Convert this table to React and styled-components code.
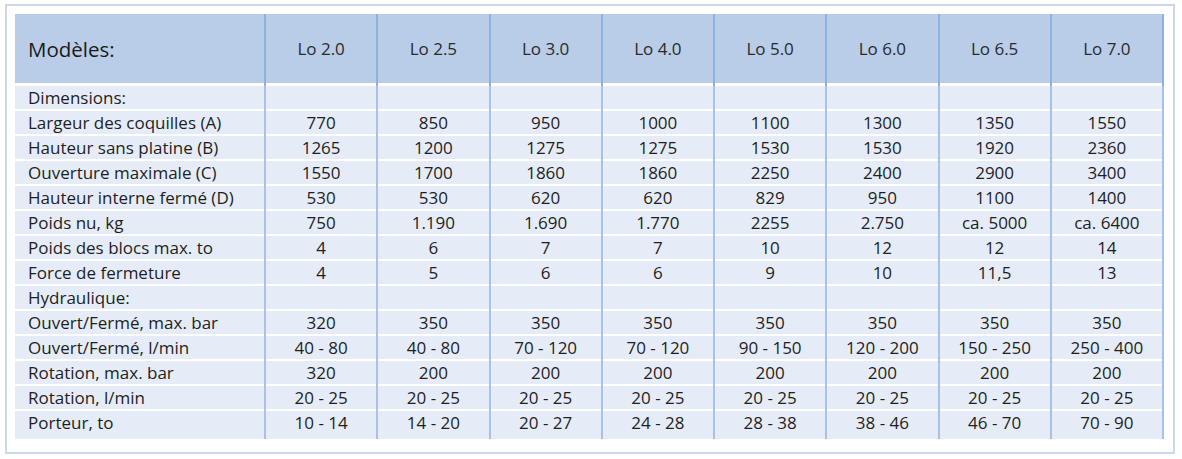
import React from "react";
import styled, { createGlobalStyle } from "styled-components";

const Global = createGlobalStyle`
  html, body { margin: 0; padding: 0; background: #ffffff; }
  body { font-family: "Open Sans", "Noto Sans", "Liberation Sans", sans-serif; color: #1e1e1e; }
`;

const Frame = styled.div`
  box-sizing: border-box;
  margin: 4px 0 0 5px;
  width: 1170px;
  height: 450px;
  border: 2px solid #c9d8ef;
  padding: 8px 9px 13px 8px;
  background: #fff;
`;

const Table = styled.div`
  display: grid;
  grid-template-columns: 249px repeat(7, 112.25px) 114.25px;
  width: 1149px;
`;

const HeadCell = styled.div`
  box-sizing: border-box;
  height: 72px;
  padding-bottom: 3px;
  display: flex;
  align-items: center;
  justify-content: ${(p) => (p.$first ? "flex-start" : "center")};
  padding-left: ${(p) => (p.$first ? "13px" : "0")};
  font-size: ${(p) => (p.$first ? "20.5px" : "17px")};
  color: ${(p) => (p.$first ? "#1a1a1a" : "#2a2a2a")};
  border-left: ${(p) => (p.$first ? "none" : "2px solid #8fb1dd")};
  border-right: ${(p) => (p.$lastCol ? "2px solid #8fb1dd" : "none")};
  background: linear-gradient(to bottom, #b9cde9 69px, #ffffff 69px);
  background-clip: padding-box;
`;

const Cell = styled.div`
  box-sizing: border-box;
  height: ${(p) => (p.$lastRow ? "28px" : "25px")};
  padding-bottom: ${(p) => (p.$lastRow ? "5px" : "2px")};
  display: flex;
  align-items: center;
  justify-content: ${(p) => (p.$first ? "flex-start" : "center")};
  padding-left: ${(p) => (p.$first ? "13px" : "0")};
  font-size: 17px;
  white-space: nowrap;
  border-left: ${(p) => (p.$first ? "none" : "2px solid #a8c1e6")};
  border-right: ${(p) => (p.$lastCol ? "2px solid #a8c1e6" : "none")};
  background: ${(p) =>
    p.$lastRow
      ? "#e5ecf7"
      : "linear-gradient(to bottom, #e5ecf7 23px, #ffffff 23px)"};
`;

const models = ["Lo 2.0", "Lo 2.5", "Lo 3.0", "Lo 4.0", "Lo 5.0", "Lo 6.0", "Lo 6.5", "Lo 7.0"];

const rows = [
  ["Dimensions:", ["", "", "", "", "", "", "", ""]],
  ["Largeur des coquilles (A)", ["770", "850", "950", "1000", "1100", "1300", "1350", "1550"]],
  ["Hauteur sans platine (B)", ["1265", "1200", "1275", "1275", "1530", "1530", "1920", "2360"]],
  ["Ouverture maximale (C)", ["1550", "1700", "1860", "1860", "2250", "2400", "2900", "3400"]],
  ["Hauteur interne fermé (D)", ["530", "530", "620", "620", "829", "950", "1100", "1400"]],
  ["Poids nu, kg", ["750", "1.190", "1.690", "1.770", "2255", "2.750", "ca. 5000", "ca. 6400"]],
  ["Poids des blocs max. to", ["4", "6", "7", "7", "10", "12", "12", "14"]],
  ["Force de fermeture", ["4", "5", "6", "6", "9", "10", "11,5", "13"]],
  ["Hydraulique:", ["", "", "", "", "", "", "", ""]],
  ["Ouvert/Fermé, max. bar", ["320", "350", "350", "350", "350", "350", "350", "350"]],
  ["Ouvert/Fermé, l/min", ["40 - 80", "40 - 80", "70 - 120", "70 - 120", "90 - 150", "120 - 200", "150 - 250", "250 - 400"]],
  ["Rotation, max. bar", ["320", "200", "200", "200", "200", "200", "200", "200"]],
  ["Rotation, l/min", ["20 - 25", "20 - 25", "20 - 25", "20 - 25", "20 - 25", "20 - 25", "20 - 25", "20 - 25"]],
  ["Porteur, to", ["10 - 14", "14 - 20", "20 - 27", "24 - 28", "28 - 38", "38 - 46", "46 - 70", "70 - 90"]],
];

export default function App() {
  return (
    <>
      <Global />
      <Frame>
        <Table>
          <HeadCell $first>Modèles:</HeadCell>
          {models.map((m, i) => (
            <HeadCell key={m} $lastCol={i === models.length - 1}>
              {m}
            </HeadCell>
          ))}
          {rows.map(([label, vals], r) => {
            const lastRow = r === rows.length - 1;
            return (
              <React.Fragment key={label}>
                <Cell $first $lastRow={lastRow}>
                  {label}
                </Cell>
                {vals.map((v, i) => (
                  <Cell key={i} $lastRow={lastRow} $lastCol={i === vals.length - 1}>
                    {v}
                  </Cell>
                ))}
              </React.Fragment>
            );
          })}
        </Table>
      </Frame>
    </>
  );
}
